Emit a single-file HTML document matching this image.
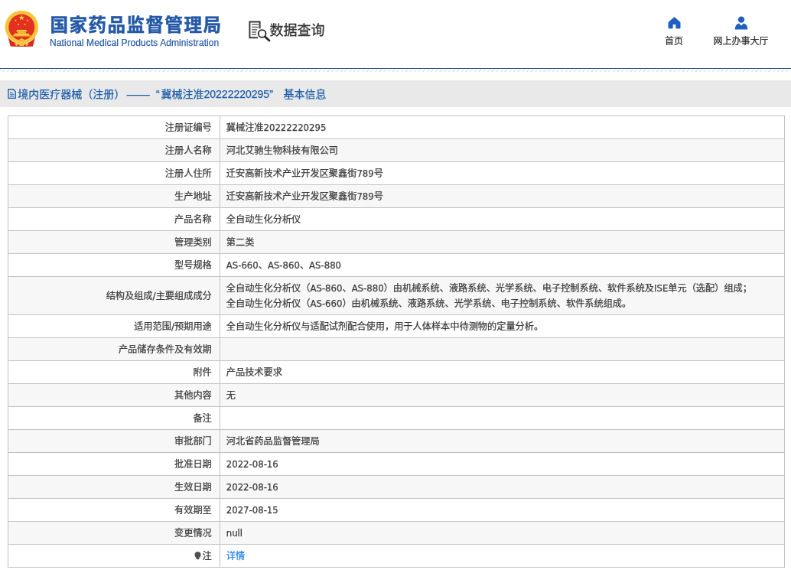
<!DOCTYPE html>
<html lang="zh-CN">
<head>
<meta charset="utf-8">
<title>国家药品监督管理局 数据查询</title>
<style>
html,body{margin:0;padding:0;background:#fff;}
body{width:791px;height:576px;overflow:hidden;position:relative;font-family:"Liberation Sans","Noto Sans CJK SC",sans-serif;color:#333;}
#wrap{position:absolute;left:0;top:0;width:1034px;height:753px;transform:scale(0.765);transform-origin:0 0;background:#fff;will-change:transform;}
#hdr{position:absolute;left:0;top:0;width:1034px;height:88.7px;border-bottom:1.7px solid #27558f;background:#fff;}
#hdr:after{content:"";position:absolute;left:0;top:91.2px;width:1034px;height:2.4px;background:repeating-linear-gradient(135deg,#e2e8f0 0,#e2e8f0 1.6px,#fff 1.6px,#fff 4px);}
#emblem{position:absolute;left:0;top:0;}
#t1{position:absolute;left:65.5px;top:15px;font-size:23.5px;line-height:36px;font-weight:bold;color:#2459a8;white-space:nowrap;letter-spacing:1.5px;-webkit-text-stroke:0.5px #2459a8;}
#t2{position:absolute;left:65px;top:48px;font-size:12px;line-height:16px;color:#2f5fa6;white-space:nowrap;letter-spacing:0.08px;-webkit-text-stroke:0.25px #2f5fa6;}
#q{position:absolute;left:0;top:0;white-space:nowrap;}
#q svg{position:absolute;left:320px;top:20px;}
#q span{position:absolute;left:352.5px;top:23.7px;font-size:18px;line-height:32px;color:#333;-webkit-text-stroke:0.3px #333;}
.nav{position:absolute;top:20px;text-align:center;font-size:12px;color:#333;white-space:nowrap;-webkit-text-stroke-width:0.25px;}
.nav svg{display:block;margin:0 auto;}
.nav div{margin-top:6px;line-height:16px;}
#bar{position:absolute;left:0;top:104.6px;width:1034px;height:35.8px;background:#e9e9e9;}
#bar span{position:absolute;top:1.2px;line-height:34px;font-size:14px;color:#1c5da8;white-space:nowrap;-webkit-text-stroke:0.25px #1c5da8;}
#bar svg{position:absolute;left:10px;top:11.4px;}
table{position:absolute;left:9.8px;top:151px;width:1016px;border-collapse:collapse;table-layout:fixed;font-size:12.2px;font-family:"DejaVu Sans","Noto Sans CJK SC",sans-serif;-webkit-text-stroke-width:0.25px;color:#3d3d3d;}
td{border:1px solid #c2c2c2;height:30px;padding:1px 10px 0;line-height:20px;box-sizing:border-box;}
td.k{width:277px;text-align:right;}
td.v{text-align:left;padding-left:8px;}
tr.a td{background:#f7f7f7;}
tr.d td{height:50px;}
.l{font-size:11.7px;}
a{color:#2b85e8;text-decoration:none;}
.bulb{vertical-align:-1px;margin-right:2px;}
</style>
</head>
<body>
<div id="wrap">
  <div id="hdr">
    <svg id="emblem" width="60" height="72" viewBox="0 0 60 72">
<circle cx="28.3" cy="35.4" r="21.7" fill="#f6c53a"/>
<circle cx="28.3" cy="35.6" r="17" fill="#e3301f"/>
<polygon points="28.30,19.30 29.22,21.94 32.01,21.99 29.78,23.68 30.59,26.36 28.30,24.76 26.01,26.36 26.82,23.68 24.59,21.99 27.38,21.94" fill="#fbd54a"/><polygon points="21.25,25.23 21.02,26.42 22.06,27.05 20.86,27.21 20.58,28.39 20.06,27.29 18.85,27.39 19.73,26.56 19.26,25.44 20.33,26.02" fill="#fbd54a"/><polygon points="24.20,30.33 24.39,31.53 25.58,31.76 24.50,32.32 24.65,33.53 23.78,32.67 22.68,33.18 23.23,32.09 22.40,31.20 23.60,31.39" fill="#fbd54a"/><polygon points="32.10,30.33 32.70,31.39 33.90,31.20 33.07,32.09 33.62,33.18 32.52,32.67 31.65,33.53 31.80,32.32 30.72,31.76 31.91,31.53" fill="#fbd54a"/><polygon points="35.25,25.23 36.17,26.02 37.24,25.44 36.77,26.56 37.65,27.39 36.44,27.29 35.92,28.39 35.64,27.21 34.44,27.05 35.48,26.42" fill="#fbd54a"/>
<path d="M22.4 39 L34.2 39 L35.6 41.2 L21 41.2 Z" fill="#f8cf45"/>
<rect x="22.8" y="41.2" width="11" height="2.6" fill="#f3b735"/>
<path d="M19.2 43.8 L37.4 43.8 L38.8 46 L17.8 46 Z" fill="#f8cf45"/>
<rect x="16.4" y="46" width="23.8" height="1.6" fill="#f3b735"/>
<path d="M24.6 52.6 Q28.3 47.4 32 52.6 Z" fill="#f6c53a"/>
<path d="M10.6 48.6 Q14.6 54.5 20.6 56 L19.4 61 L13.6 60.4 Z" fill="#d9291b"/>
<path d="M46 48.6 Q42 54.5 36 56 L37.2 61 L43 60.4 Z" fill="#d9291b"/>
<path d="M19 56.2 Q28.3 59.4 37.6 56.2 L37 61 L19.6 61 Z" fill="#d9291b"/>
<path d="M18.6 56.4 L21.6 60.6 L24.2 57.6 L26 60.6 L28.3 57 L30.6 60.6 L32.4 57.6 L35 60.6 L38 56.4 Q28.3 59.4 18.6 56.4 Z" fill="#f6c53a"/>
<circle cx="28.3" cy="57.4" r="2.6" fill="#f6c53a"/>
</svg>
    <div id="t1">国家药品监督管理局</div>
    <div id="t2">National Medical Products Administration</div>
    <div id="q"><svg id="qi" width="40" height="40" viewBox="320 20 40 40">
<path d="M339.6 37.5 V28.5 H326.4 V49.3 H337" fill="none" stroke="#3a3a3a" stroke-width="2"/>
<path d="M329.2 32.1 H338 M329.2 35.4 H338 M329.2 38.7 H336 M329.2 42 H335 M329.2 45.3 H335" stroke="#666" stroke-width="1.5"/>
<circle cx="342.6" cy="44" r="4.9" fill="#fff" stroke="#222" stroke-width="1.8"/>
<path d="M346.4 48 L352 53.1" stroke="#222" stroke-width="2.7" stroke-linecap="round"/>
</svg><span>数据查询</span></div>
    <div class="nav" style="left:851px;width:60px;top:22px;"><svg width="17" height="16" viewBox="0 0 17 16"><path d="M8.5 0.6 L16 7.2 V14.9 H10.9 V9.6 H6.1 V14.9 H1 V7.2 Z" fill="#1f5fc0" stroke="#1f5fc0" stroke-width="1" stroke-linejoin="round"/></svg><div style="margin-top:7.8px;">首页</div></div>
    <div class="nav" style="left:918.5px;width:100px;top:20.5px;"><svg width="18" height="18" viewBox="0 0 18 18"><circle cx="9" cy="4.6" r="4.2" fill="#1f5fc0"/><path d="M0.6 17.6 Q1 10.6 6 9.6 L9 12.6 L12 9.6 Q17 10.6 17.4 17.6 Z" fill="#1f5fc0"/></svg><div style="margin-top:7.3px;">网上办事大厅</div></div>
  </div>
  <div id="bar"><svg width="11.4" height="13.3" viewBox="0 0 12 14"><path d="M1 0.8 H7.6 L10.8 4 V13 H1 Z" fill="none" stroke="#1c5da8" stroke-width="1.4"/><path d="M3 5 H7 M3 7.6 H8.8 M3 10.2 H8.8" stroke="#1c5da8" stroke-width="1.2"/></svg><span style="left:23.3px">境内医疗器械（注册）</span><span style="left:165.7px;font-size:15px">——</span><span style="left:204px">“</span><span style="left:210.5px">冀械注准20222220295”</span><span style="left:370.5px">基本信息</span></div>
  <table>
    <tr><td class="k">注册证编号</td><td class="v">冀械注准<span class="l">20222220295</span></td></tr>
    <tr class="a"><td class="k">注册人名称</td><td class="v">河北艾驰生物科技有限公司</td></tr>
    <tr><td class="k">注册人住所</td><td class="v">迁安高新技术产业开发区聚鑫街<span class="l">789</span>号</td></tr>
    <tr class="a"><td class="k">生产地址</td><td class="v">迁安高新技术产业开发区聚鑫街<span class="l">789</span>号</td></tr>
    <tr><td class="k">产品名称</td><td class="v">全自动生化分析仪</td></tr>
    <tr class="a"><td class="k">管理类别</td><td class="v">第二类</td></tr>
    <tr><td class="k">型号规格</td><td class="v"><span class="l">AS-660</span>、<span class="l">AS-860</span>、<span class="l">AS-880</span></td></tr>
    <tr class="a d"><td class="k">结构及组成/主要组成成分</td><td class="v">全自动生化分析仪（<span class="l">AS-860</span>、<span class="l">AS-880</span>）由机械系统、液路系统、光学系统、电子控制系统、软件系统及<span class="l">ISE</span>单元（选配）组成；<br>全自动生化分析仪（<span class="l">AS-660</span>）由机械系统、液路系统、光学系统、电子控制系统、软件系统组成。</td></tr>
    <tr><td class="k">适用范围/预期用途</td><td class="v">全自动生化分析仪与适配试剂配合使用，用于人体样本中待测物的定量分析。</td></tr>
    <tr class="a"><td class="k">产品储存条件及有效期</td><td class="v"></td></tr>
    <tr><td class="k">附件</td><td class="v">产品技术要求</td></tr>
    <tr class="a"><td class="k">其他内容</td><td class="v">无</td></tr>
    <tr><td class="k">备注</td><td class="v"></td></tr>
    <tr class="a"><td class="k">审批部门</td><td class="v">河北省药品监督管理局</td></tr>
    <tr><td class="k">批准日期</td><td class="v"><span class="l">2022-08-16</span></td></tr>
    <tr class="a"><td class="k">生效日期</td><td class="v"><span class="l">2022-08-16</span></td></tr>
    <tr><td class="k">有效期至</td><td class="v"><span class="l">2027-08-15</span></td></tr>
    <tr class="a"><td class="k">变更情况</td><td class="v"><span class="l">null</span></td></tr>
    <tr><td class="k"><svg class="bulb" width="9" height="11" viewBox="0 0 9 11"><circle cx="4.5" cy="4.2" r="4" fill="#505050"/><path d="M2.6 6.8 H6.4 V9.4 Q4.5 11.2 2.6 9.4 Z" fill="#505050"/></svg>注</td><td class="v"><a>详情</a></td></tr>
  </table>
</div>
</body>
</html>
